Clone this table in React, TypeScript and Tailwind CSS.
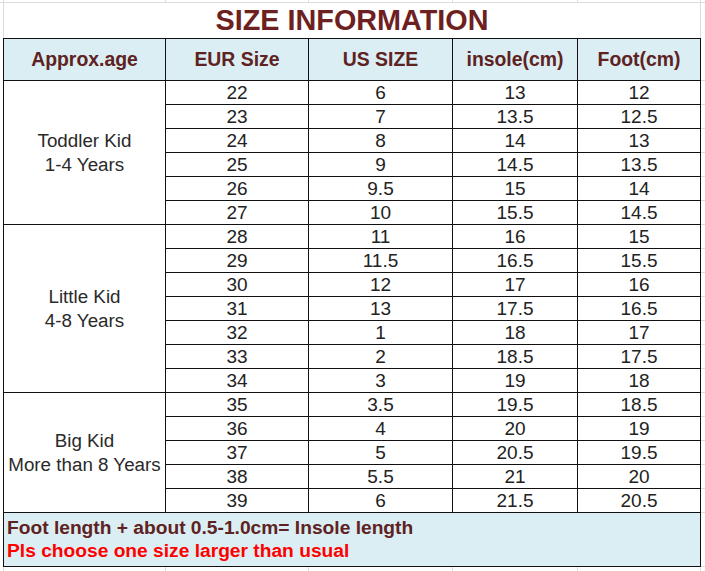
import React from "react";

const rows: [string, string, string, string][] = [
  ["22", "6", "13", "12"],
  ["23", "7", "13.5", "12.5"],
  ["24", "8", "14", "13"],
  ["25", "9", "14.5", "13.5"],
  ["26", "9.5", "15", "14"],
  ["27", "10", "15.5", "14.5"],
  ["28", "11", "16", "15"],
  ["29", "11.5", "16.5", "15.5"],
  ["30", "12", "17", "16"],
  ["31", "13", "17.5", "16.5"],
  ["32", "1", "18", "17"],
  ["33", "2", "18.5", "17.5"],
  ["34", "3", "19", "18"],
  ["35", "3.5", "19.5", "18.5"],
  ["36", "4", "20", "19"],
  ["37", "5", "20.5", "19.5"],
  ["38", "5.5", "21", "20"],
  ["39", "6", "21.5", "20.5"],
];

const groups = [
  { start: 0, span: "row-span-6", l1: "Toddler Kid", l2: "1-4 Years" },
  { start: 6, span: "row-span-7", l1: "Little Kid", l2: "4-8 Years" },
  { start: 13, span: "row-span-5", l1: "Big Kid", l2: "More than 8 Years" },
];

const headers = ["Approx.age", "EUR Size", "US SIZE", "insole(cm)", "Foot(cm)"];

function GridStrip({ h, bottom }: { h: string; bottom?: boolean }) {
  return (
    <div className={`flex ${h} ${bottom ? "" : "border-b border-[#dcdcdc]"}`}>
      <div className="w-[4px] border-r border-[#dcdcdc]" />
      <div className="w-[162px] border-r border-[#dcdcdc]" />
      <div className="w-[143px] border-r border-[#dcdcdc]" />
      <div className="w-[144px] border-r border-[#dcdcdc]" />
      <div className="w-[125px] border-r border-[#dcdcdc]" />
      <div className="w-[123px] border-r border-[#dcdcdc]" />
      <div className="flex-1" />
    </div>
  );
}

export default function App() {
  return (
    <div className="w-[705px] h-[571px] bg-white overflow-hidden flex flex-col font-['Liberation_Sans',Arial,sans-serif]">
      <GridStrip h="h-[3px]" />
      <div className="flex h-[35px]">
        <div className="w-[4px] border-r border-[#dcdcdc]" />
        <div className="w-[697px] border-r border-[#dcdcdc] flex justify-center">
          <span className="text-[28.8px] leading-[35px] font-bold text-[#6e1f1f] whitespace-nowrap">
            SIZE INFORMATION
          </span>
        </div>
        <div className="flex-1" />
      </div>
      <div className="flex">
        <div className="w-[3px]" />
        <div className="w-[698px] grid grid-cols-[161px_142px_143px_124px_122px] grid-rows-[41px_repeat(18,23px)_53px] gap-px bg-[#111111] border border-[#111111]">
          {headers.map((h) => (
            <div
              key={h}
              className="bg-[#daeef3] flex items-center justify-center text-[19.4px] leading-[23px] font-bold text-[#5e2222] whitespace-nowrap"
            >
              {h}
            </div>
          ))}
          {rows.map((r, i) => {
            const g = groups.find((x) => x.start === i);
            return (
              <React.Fragment key={i}>
                {g && (
                  <div
                    className={`${g.span} bg-white flex flex-col items-center justify-center text-[18.8px] leading-[24px] text-[#2a2a2a] whitespace-nowrap`}
                  >
                    <span>{g.l1}</span>
                    <span>{g.l2}</span>
                  </div>
                )}
                {r.map((c, j) => (
                  <div
                    key={j}
                    className="bg-white flex items-center justify-center text-[19px] leading-[23px] text-[#222222]"
                  >
                    {c}
                  </div>
                ))}
              </React.Fragment>
            );
          })}
          <div className="col-span-5 bg-[#daeef3] pl-[3px] pt-[3px] text-[19.2px] leading-[23px] font-bold whitespace-nowrap">
            <div className="text-[#5e2222]">Foot length + about 0.5-1.0cm= Insole length</div>
            <div className="text-[#ff0000]">Pls choose one size larger than usual</div>
          </div>
        </div>
        <div className="flex-1 flex flex-col">
          <div className="h-[43px] border-b border-[#dcdcdc]" />
          {rows.map((_, i) => (
            <div key={i} className="h-[24px] border-b border-[#dcdcdc]" />
          ))}
          <div className="h-[54px] border-b border-[#dcdcdc]" />
        </div>
      </div>
      <GridStrip h="h-[4px]" bottom />
    </div>
  );
}
